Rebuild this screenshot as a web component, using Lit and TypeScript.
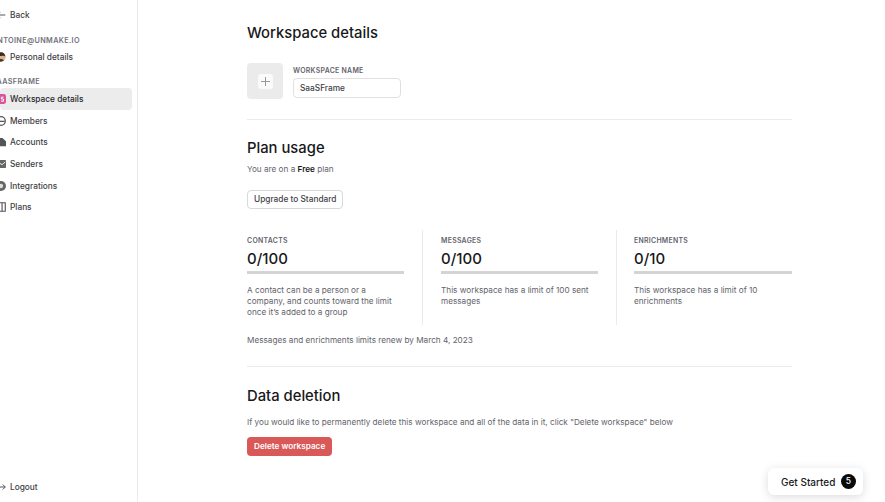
import { LitElement, html, css, svg } from 'lit';
import { customElement } from 'lit/decorators.js';

const icons = {
  back: svg`<path d="M13 7H2M6 3.500L2 7l4 3.500" fill="none" stroke="#555" stroke-width="1.400"/>`,
  person: svg`<circle cx="7" cy="7" r="6.500" fill="#d9b38c"/><path d="M1 6.500a6 6 0 0 1 12 0c-2-2-3-1-6-1s-4-1-6 1z" fill="#3a2a20"/><path d="M3 12c1-3 7-3 8 0a6.500 6.500 0 0 1-8 0z" fill="#4a3a30"/>`,
  workspace: svg`<rect x="0" y="0" width="14" height="14" rx="3" fill="#d9559b"/><path d="M10.500 4.500H7.500v2.500h3v3H7" fill="none" stroke="#fff" stroke-width="1.400"/>`,
  members: svg`<circle cx="7" cy="7" r="6" fill="none" stroke="#555" stroke-width="1.800"/><path d="M2 7.500h10" fill="none" stroke="#555" stroke-width="1.800"/>`,
  accounts: svg`<path d="M0 13V6l5-4.500h4L14 6v7z" fill="#555"/>`,
  senders: svg`<rect x="0" y="1.500" width="14" height="11" rx="1" fill="#666"/><path d="M4 5l4.500 3L13 4" fill="none" stroke="#fff" stroke-width="1.200"/>`,
  integrations: svg`<circle cx="7" cy="7" r="7" fill="#666"/><circle cx="7" cy="7" r="3" fill="#ddd"/>`,
  plans: svg`<path d="M3 1h10v12H3" fill="none" stroke="#555" stroke-width="1.600"/><path d="M8.500 1v12" stroke="#555" stroke-width="1.600"/>`,
  logout: svg`<path d="M2 3.500v7M4 7h9M9.500 3.500L13 7l-3.500 3.500" fill="none" stroke="#555" stroke-width="1.400"/>`,
};

const stats = [
  { label: 'Contacts', value: '0/100', text: "A contact can be a person or a company, and counts toward the limit once it’s added to a group" },
  { label: 'Messages', value: '0/100', text: 'This workspace has a limit of 100 sent messages' },
  { label: 'Enrichments', value: '0/10', text: 'This workspace has a limit of 10 enrichments' },
];

const navItems: [keyof typeof icons, string][] = [
  ['workspace', 'Workspace details'],
  ['members', 'Members'],
  ['accounts', 'Accounts'],
  ['senders', 'Senders'],
  ['integrations', 'Integrations'],
  ['plans', 'Plans'],
];

@customElement('app-root')
export class AppRoot extends LitElement {
  static styles = css`
    :host {
      display: flex;
      position: relative;
      width: 885px;
      height: 502px;
      overflow: hidden;
      background: #fff;
      color: #18181b;
      font-family: Inter, 'Liberation Sans', sans-serif;
      font-size: 8.200px;
    }
    .sidebar {
      width: 138px;
      flex: none;
      box-sizing: border-box;
      border-right: 1px solid #ebebeb;
      display: flex;
      flex-direction: column;
      padding: 4px 5px 4px 0;
    }
    .nav-row {
      display: flex;
      align-items: center;
      gap: 4px;
      height: 21.700px;
      font-size: 8.300px;
      font-weight: 500;
      color: #3f3f46;
      border-radius: 4px;
      flex: none;
    }
    .nav-row svg {
      width: 10px;
      height: 10px;
      margin-left: -4px;
      flex: none;
    }
    .nav-row.active {
      background: #ececec;
      color: #27272a;
    }
    .group {
      font-size: 7.250px;
      font-weight: 600;
      letter-spacing: 0.35px;
      text-transform: uppercase;
      color: #71717a;
      white-space: nowrap;
      line-height: 12px;
      flex: none;
    }
    .group.first {
      margin: 9px 0 -1px -8.300px;
    }
    .group.second {
      margin: 9px 0 -0.300px -8.500px;
    }
    .spacer {
      flex: 1;
    }
    .main {
      margin-left: 109px;
      width: 545px;
      padding-top: 22px;
      flex: none;
    }
    h1,
    h2 {
      margin: 0;
      font-size: 14.800px;
      line-height: 22px;
      font-weight: 500;
      color: #18181b;
    }
    .name-row {
      display: flex;
      gap: 10px;
      margin-top: 19px;
    }
    .avatar {
      width: 36px;
      height: 36px;
      border-radius: 4px;
      background: #ebebeb;
      display: flex;
      align-items: center;
      justify-content: center;
    }
    .avatar span {
      width: 15px;
      height: 15px;
      border-radius: 3px;
      background: #fafafa;
      display: flex;
      align-items: center;
      justify-content: center;
    }
    .avatar svg {
      width: 9px;
      height: 9px;
    }
    .label {
      font-size: 6.900px;
      font-weight: 600;
      letter-spacing: 0.3px;
      text-transform: uppercase;
      color: #63636b;
      line-height: 9px;
    }
    .name-field .label {
      margin-top: 3px;
    }
    .input {
      box-sizing: border-box;
      width: 108px;
      height: 20px;
      margin-top: 3px;
      border: 1px solid #e0e0e0;
      border-radius: 4px;
      padding-left: 6px;
      font-size: 8.300px;
      font-weight: 500;
      line-height: 18px;
      color: #3f3f46;
    }
    hr {
      border: none;
      border-top: 1px solid #ebebeb;
      margin: 0;
    }
    .first-rule {
      margin-top: 20px;
    }
    .usage {
      margin-top: 17px;
    }
    p {
      margin: 0;
      font-size: 8.200px;
      line-height: 11px;
      color: #63636b;
    }
    .plan-line {
      margin-top: 5px;
    }
    .plan-line b {
      font-weight: 600;
      color: #18181b;
    }
    .btn {
      display: inline-block;
      box-sizing: border-box;
      height: 19px;
      line-height: 17px;
      border: 1px solid #d8d8d8;
      border-radius: 4px;
      padding: 0 6px;
      font-size: 8.300px;
      font-weight: 500;
      color: #3f3f46;
      margin-top: 15px;
    }
    .stats {
      display: grid;
      grid-template-columns: 175px 195px 175px;
      margin-top: 21px;
      height: 95px;
    }
    .stat {
      padding: 6px 18px 0 0;
      box-sizing: border-box;
    }
    .stat:nth-child(2) {
      border-left: 1px solid #ebebeb;
      border-right: 1px solid #ebebeb;
      padding: 6px 18px 0;
    }
    .stat:nth-child(3) {
      padding: 6px 0 0 17px;
    }
    .value {
      font-size: 15px;
      font-weight: 500;
      line-height: 20px;
      margin-top: 4px;
      color: #18181b;
    }
    .bar {
      height: 3px;
      background: #d4d4d4;
      margin-top: 2px;
    }
    .stat p {
      margin-top: 11px;
    }
    .renew {
      margin-top: 10px;
    }
    .second-rule {
      margin-top: 20px;
    }
    .deletion {
      margin-top: 18px;
    }
    .warn {
      margin-top: 10px;
    }
    .danger {
      display: inline-block;
      height: 19px;
      line-height: 19px;
      padding: 0 7px;
      border-radius: 4px;
      background: #d95858;
      color: #fff;
      font-size: 8.200px;
      font-weight: 600;
      margin-top: 9px;
    }
    .launcher {
      position: absolute;
      left: 768px;
      top: 468px;
      width: 95px;
      height: 27px;
      box-sizing: border-box;
      padding: 0 7px 0 13px;
      display: flex;
      align-items: center;
      justify-content: space-between;
      border-radius: 6px;
      background: #fff;
      box-shadow: 0 2px 10px rgba(0, 0, 0, 0.14);
      font-size: 10px;
      font-weight: 500;
      color: #18181b;
    }
    .launcher span {
      width: 15px;
      height: 15px;
      border-radius: 50%;
      background: #0a0a0a;
      color: #fff;
      font-size: 8.500px;
      line-height: 15px;
      text-align: center;
    }
  `;

  private navRow(icon: keyof typeof icons, label: string, active = false) {
    return html`<div class="nav-row ${active ? 'active' : ''}">
      <svg viewBox="0 0 14 14">${icons[icon]}</svg>${label}
    </div>`;
  }

  render() {
    return html`
      <aside class="sidebar">
        ${this.navRow('back', 'Back')}
        <div class="group first">Antoine@unmake.io</div>
        ${this.navRow('person', 'Personal details')}
        <div class="group second">SaaSFrame</div>
        ${navItems.map(([icon, label], i) => this.navRow(icon, label, i === 0))}
        <div class="spacer"></div>
        ${this.navRow('logout', 'Logout')}
      </aside>
      <main class="main">
        <h1>Workspace details</h1>
        <div class="name-row">
          <div class="avatar">
            <span><svg viewBox="0 0 9 9"><path d="M4.500 0v9M0 4.500h9" stroke="#999" stroke-width="1"/></svg></span>
          </div>
          <div class="name-field">
            <div class="label">Workspace name</div>
            <div class="input">SaaSFrame</div>
          </div>
        </div>
        <hr class="first-rule" />
        <h2 class="usage">Plan usage</h2>
        <p class="plan-line">You are on a <b>Free</b> plan</p>
        <div class="btn">Upgrade to Standard</div>
        <div class="stats">
          ${stats.map(
            (s) => html`<div class="stat">
              <div class="label">${s.label}</div>
              <div class="value">${s.value}</div>
              <div class="bar"></div>
              <p>${s.text}</p>
            </div>`
          )}
        </div>
        <p class="renew">Messages and enrichments limits renew by March 4, 2023</p>
        <hr class="second-rule" />
        <h2 class="deletion">Data deletion</h2>
        <p class="warn">If you would like to permanently delete this workspace and all of the data in it, click "Delete workspace" below</p>
        <div class="danger">Delete workspace</div>
      </main>
      <div class="launcher">Get Started<span>5</span></div>
    `;
  }
}
